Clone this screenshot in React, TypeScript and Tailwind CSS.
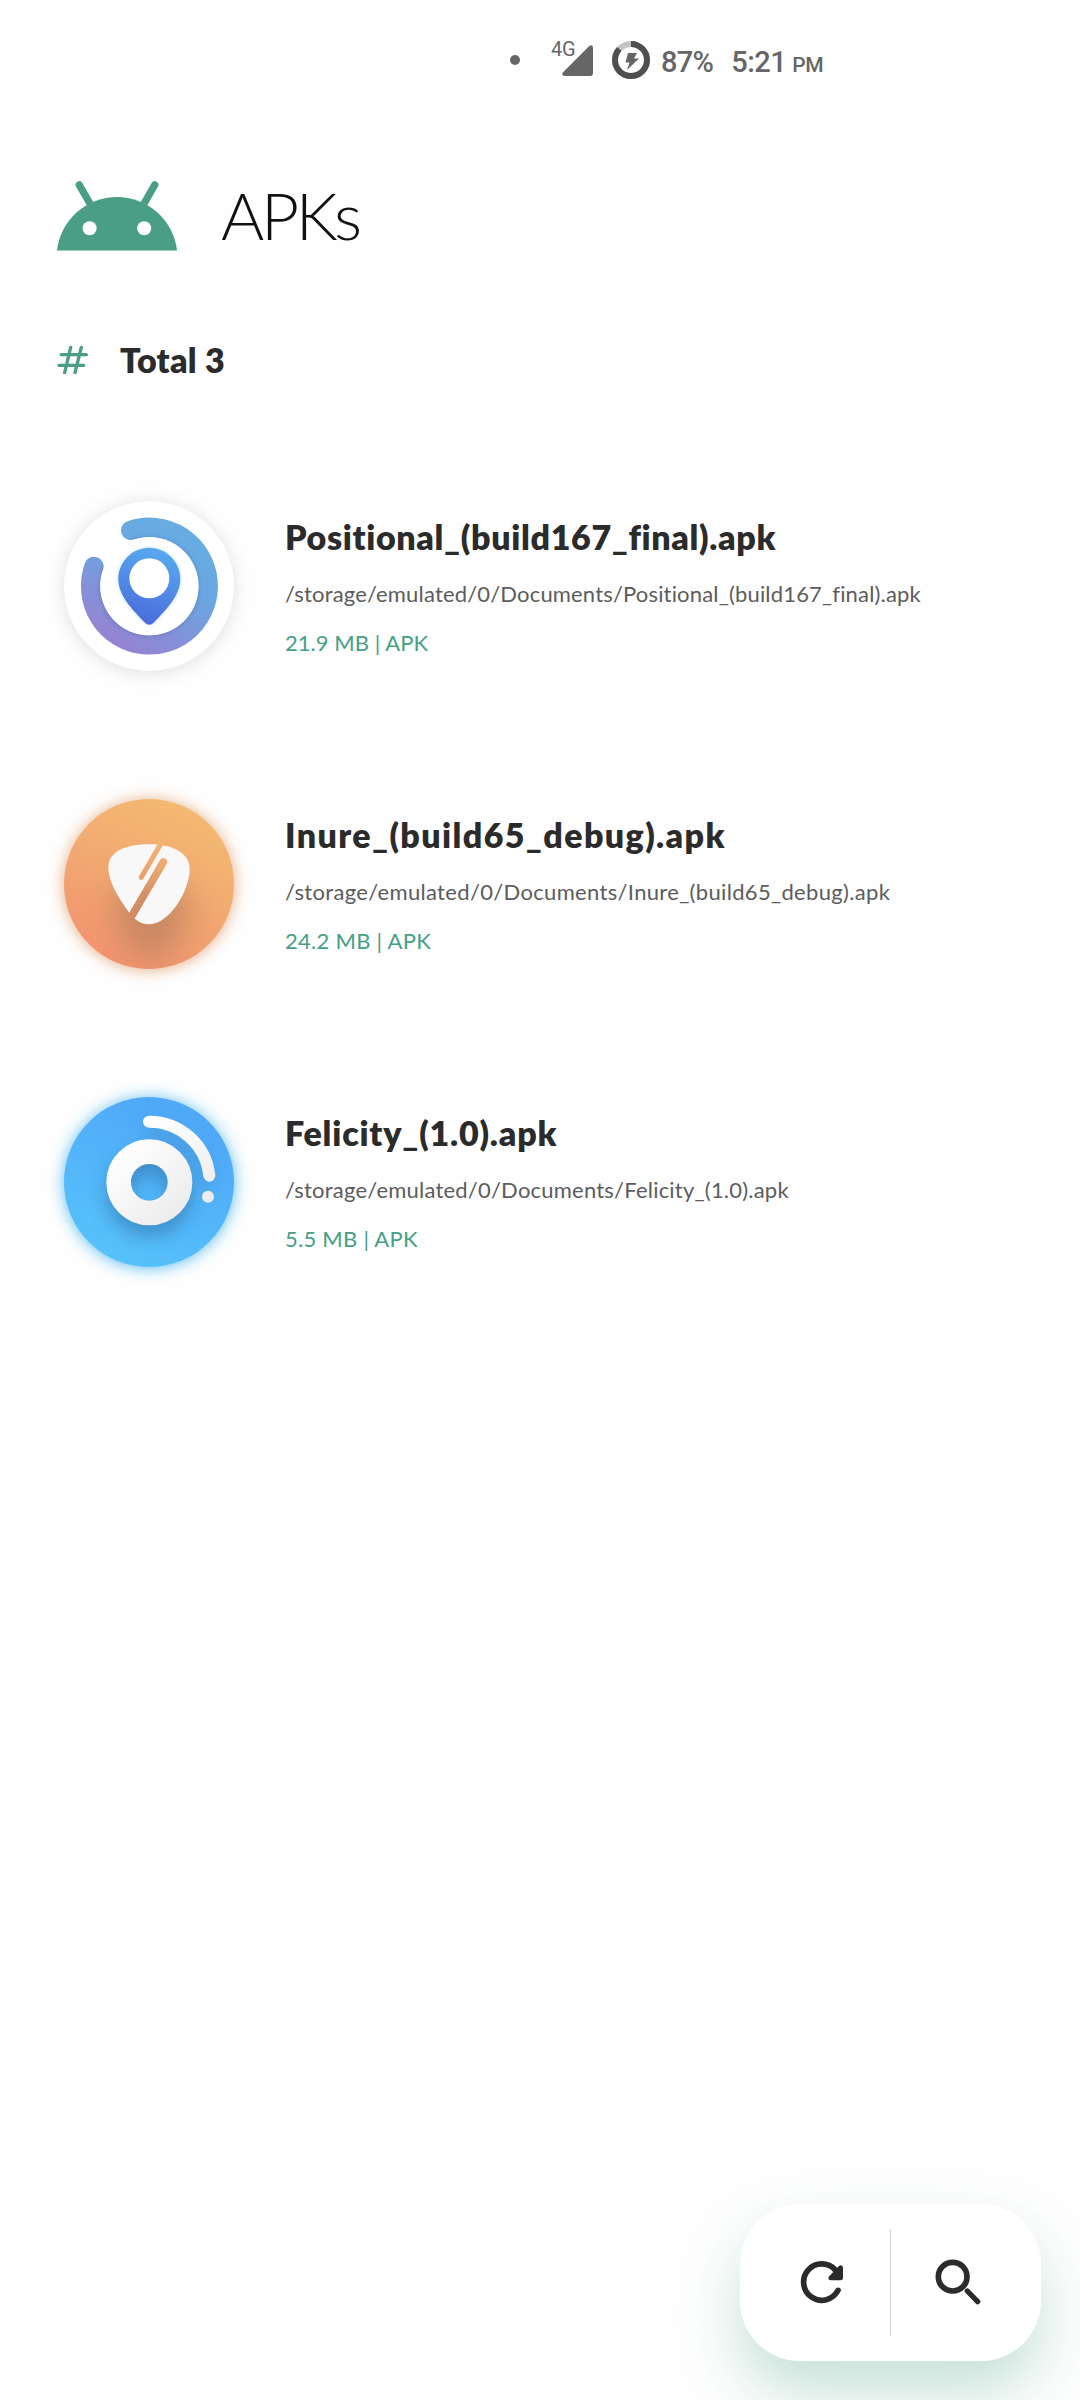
type Apk = {
  name: string;
  path: string;
  meta: string;
  nameTracking: string;
  pathTracking: string;
  metaTracking: string;
  icon: () => React.ReactNode;
};

function PositionalIcon() {
  return (
    <svg className="size-[170px] shrink-0 overflow-visible" viewBox="72 63 510 510">
      <defs>
        <linearGradient id="posRing" gradientUnits="userSpaceOnUse" x1="420" y1="160" x2="230" y2="490">
          <stop offset="0" stopColor="#67ace3" />
          <stop offset="0.35" stopColor="#6aa6e0" />
          <stop offset="1" stopColor="#9583d3" />
        </linearGradient>
        <linearGradient id="posPin" gradientUnits="userSpaceOnUse" x1="370" y1="215" x2="300" y2="425">
          <stop offset="0" stopColor="#57a9f0" />
          <stop offset="1" stopColor="#4b6cda" />
        </linearGradient>
        <filter id="posBlur" x="-30%" y="-30%" width="160%" height="160%">
          <feGaussianBlur stdDeviation="26" />
        </filter>
        <filter id="posGlow" x="-30%" y="-30%" width="160%" height="160%">
          <feGaussianBlur stdDeviation="6" />
        </filter>
        <mask id="posMask" maskUnits="userSpaceOnUse" x="72" y="63" width="510" height="510">
          <path d="M272 151A176.5 176.5 0 1 1 162 259" fill="none" stroke="#fff" strokeWidth="58" strokeLinecap="round" />
        </mask>
      </defs>
      <circle cx="327" cy="324" r="254" fill="#5f6a74" opacity="0.22" filter="url(#posBlur)" />
      <circle cx="327" cy="318" r="255" fill="#fff" />
      <path d="M272 151A176.5 176.5 0 1 1 162 259" fill="none" stroke="url(#posRing)" strokeWidth="58" strokeLinecap="round" />
      <g mask="url(#posMask)">
        <circle cx="328" cy="320" r="149" fill="#4a4f96" opacity="0.3" filter="url(#posGlow)" />
      </g>
      <circle cx="328" cy="319" r="147" fill="#fff" />
      <path d="M328 203C277 203 235 245 235 297C235 350 282 395 313 427Q328 441 343 427C374 395 421 350 421 297C421 245 379 203 328 203Z" fill="#6fb8f5" opacity="0.4" filter="url(#posGlow)" />
      <path d="M328 203C277 203 235 245 235 297C235 346 276 388 315 428Q328 440 341 428C380 388 421 346 421 297C421 245 379 203 328 203Z" fill="url(#posPin)" />
      <circle cx="328" cy="295" r="60" fill="#fff" />
    </svg>
  );
}

function InureIcon() {
  return (
    <svg className="size-[170px] shrink-0 overflow-visible" viewBox="72 71 510 510">
      <defs>
        <linearGradient id="inBg" gradientUnits="userSpaceOnUse" x1="420" y1="90" x2="200" y2="560">
          <stop offset="0" stopColor="#f3b972" />
          <stop offset="0.5" stopColor="#f2a871" />
          <stop offset="1" stopColor="#f3936f" />
        </linearGradient>
        <filter id="inBlur" x="-30%" y="-30%" width="160%" height="160%">
          <feGaussianBlur stdDeviation="24" />
        </filter>
        <filter id="inShade" x="-70%" y="-70%" width="240%" height="240%">
          <feGaussianBlur stdDeviation="46" />
        </filter>
        <clipPath id="inClip">
          <circle cx="327" cy="326" r="255" />
        </clipPath>
        <mask id="inSlots" maskUnits="userSpaceOnUse" x="180" y="180" width="300" height="300">
          <rect x="180" y="180" width="300" height="300" fill="#fff" />
          <path d="M304 306L366 199" stroke="#000" strokeWidth="15" strokeLinecap="round" />
          <path d="M370 260L264 441" stroke="#000" strokeWidth="23" strokeLinecap="round" />
        </mask>
      </defs>
      <circle cx="327" cy="328" r="254" fill="#e09a66" opacity="0.85" filter="url(#inBlur)" />
      <circle cx="327" cy="326" r="255" fill="url(#inBg)" />
      <g clipPath="url(#inClip)">
        <path d="M327 320C410 320 455 350 450 400C440 460 390 560 335 560C280 560 225 460 218 400C215 350 250 320 327 320Z" fill="#b07c5c" opacity="0.62" filter="url(#inShade)" />
      </g>
      <path mask="url(#inSlots)" d="M327 207C400 207 449 234 449 282C449 345 388 447 328 447C296 447 280 428 264 407C236 368 205 318 205 277C205 226 262 207 327 207Z" fill="#f8f8f8" />
    </svg>
  );
}

function FelicityIcon() {
  return (
    <svg className="size-[170px] shrink-0 overflow-visible" viewBox="72 80 510 510">
      <defs>
        <linearGradient id="feBg" gradientUnits="userSpaceOnUse" x1="430" y1="130" x2="220" y2="560">
          <stop offset="0" stopColor="#4fa8f8" />
          <stop offset="1" stopColor="#56c1fb" />
        </linearGradient>
        <linearGradient id="feDisc" gradientUnits="userSpaceOnUse" x1="240" y1="240" x2="420" y2="430">
          <stop offset="0" stopColor="#ffffff" />
          <stop offset="1" stopColor="#ececec" />
        </linearGradient>
        <linearGradient id="feArc" gradientUnits="userSpaceOnUse" x1="330" y1="150" x2="510" y2="390">
          <stop offset="0" stopColor="#ffffff" />
          <stop offset="1" stopColor="#ececec" />
        </linearGradient>
        <filter id="feBlur" x="-30%" y="-30%" width="160%" height="160%">
          <feGaussianBlur stdDeviation="24" />
        </filter>
        <filter id="feShade" x="-40%" y="-40%" width="180%" height="180%">
          <feGaussianBlur stdDeviation="26" />
        </filter>
        <clipPath id="feClip">
          <circle cx="327" cy="335" r="255" />
        </clipPath>
      </defs>
      <circle cx="327" cy="338" r="255" fill="#4fb8ee" opacity="0.95" filter="url(#feBlur)" />
      <circle cx="327" cy="335" r="255" fill="url(#feBg)" />
      <g clipPath="url(#feClip)">
        <g fill="none" stroke="#27699c" strokeLinecap="round" filter="url(#feShade)">
          <circle cx="328" cy="370" r="92" strokeWidth="74" opacity="0.5" />
          <path d="M327 185A181 181 0 0 1 504 346" strokeWidth="30" opacity="0.35" />
        </g>
      </g>
      <circle cx="328" cy="336" r="92" fill="none" stroke="url(#feDisc)" strokeWidth="74" />
      <path d="M327 154A181 181 0 0 1 508 316" fill="none" stroke="url(#feArc)" strokeWidth="36" strokeLinecap="round" />
      <circle cx="504" cy="379" r="18" fill="url(#feArc)" />
    </svg>
  );
}

const apks: Apk[] = [
  {
    name: "Positional_(build167_final).apk",
    path: "/storage/emulated/0/Documents/Positional_(build167_final).apk",
    meta: "21.9 MB | APK",
    nameTracking: "tracking-[0.65px]",
    pathTracking: "tracking-[0.17px]",
    metaTracking: "tracking-[0.04px]",
    icon: PositionalIcon,
  },
  {
    name: "Inure_(build65_debug).apk",
    path: "/storage/emulated/0/Documents/Inure_(build65_debug).apk",
    meta: "24.2 MB | APK",
    nameTracking: "tracking-[1.38px]",
    pathTracking: "tracking-[0.33px]",
    metaTracking: "tracking-[0.27px]",
    icon: InureIcon,
  },
  {
    name: "Felicity_(1.0).apk",
    path: "/storage/emulated/0/Documents/Felicity_(1.0).apk",
    meta: "5.5 MB | APK",
    nameTracking: "tracking-[0.8px]",
    pathTracking: "tracking-[0.21px]",
    metaTracking: "tracking-[0.25px]",
    icon: FelicityIcon,
  },
];

function StatusBar() {
  return (
    <div className="flex h-[120px] items-center pl-[510px] font-['Roboto',sans-serif] text-[#666666]">
      <span className="size-2.5 rounded-full bg-[#666666]" />
      <div className="relative ml-[31px] h-[36px] w-[42px]">
        <span className="absolute top-[-3px] left-0 text-[20px] leading-5 tracking-[-0.3px]">4G</span>
        <svg className="absolute top-[3px] left-[11px] size-[31px]" viewBox="0 0 31 31">
          <path d="M27.5 0.8Q31 -1 31 3V28Q31 31 28 31H3Q-1 31 0.8 27.5Z" fill="#666" />
        </svg>
      </div>
      <svg className="ml-[19px] size-[38px]" viewBox="0 0 38 38">
        <circle cx="19" cy="19" r="16" fill="none" stroke="#c4c4c4" strokeWidth="6" />
        <circle cx="19" cy="19" r="16" fill="none" stroke="#4f4f4f" strokeWidth="6" pathLength="100" strokeDasharray="87 100" transform="rotate(-90 19 19)" />
        <path d="M16 12H25L22 17.5H27L15 29L17.5 21.5H13.5Z" fill="#666" />
      </svg>
      <span className="ml-[11px] pt-[5px] text-[29px] leading-none font-medium tracking-[-0.7px]">87%</span>
      <span className="ml-[18px] pt-[5px] text-[29px] leading-none font-medium tracking-[-0.5px]">5:21</span>
      <span className="ml-[6px] pt-[10px] text-[21px] leading-none font-medium tracking-[-0.5px]">PM</span>
    </div>
  );
}

function AndroidHead() {
  return (
    <svg className="mt-[10px] h-[70px] w-[120px]" viewBox="0 0 120 70">
      <path d="M0 69.5A60.4 60.4 0 0 1 120 69.5Z" fill="#4a9e85" />
      <path d="M22.3 4L35.5 27M97.7 4L84.5 27" stroke="#4a9e85" strokeWidth="7.4" strokeLinecap="round" />
      <circle cx="32.6" cy="47.3" r="7" fill="#fefefe" />
      <circle cx="87.2" cy="47.3" r="7" fill="#fefefe" />
    </svg>
  );
}

export default function App() {
  return (
    <div className="flex h-[2400px] w-[1080px] flex-col overflow-hidden bg-[#fefefe] font-['Lato','Open_Sans',sans-serif]">
      <StatusBar />

      <header className="mt-[51px] flex h-20 items-start pl-[57px]">
        <AndroidHead />
        <h1 className="ml-[44px] pt-1 text-[66px] leading-[80px] font-light tracking-[-3.3px] text-[#111111]">APKs</h1>
      </header>

      <div className="mt-[88px] flex h-10 items-center pl-[57px]">
        <svg className="h-[30px] w-[32px]" viewBox="0 0 96 90">
          <path d="M13 32H88M6 64H80M41 10L23 86M73 10L54 86" stroke="#4a9e85" strokeWidth="10" strokeLinecap="round" />
        </svg>
        <span className="ml-[31px] pt-px text-[34px] leading-10 font-extrabold tracking-[0.25px] text-[#2b2b2b]">Total 3</span>
      </div>

      <main className="mt-[58px] flex flex-col">
        {apks.map((apk) => (
          <div key={apk.name} className="flex h-[298px] items-center pl-16">
            <apk.icon />
            <div className="ml-[51px] flex h-full flex-col whitespace-nowrap">
              <span className={`mt-20 text-[34px] leading-10 font-extrabold text-[#2b2b2b] ${apk.nameTracking}`}>{apk.name}</span>
              <span className={`mt-[17px] text-[22px] leading-10 text-[#5c5c5c] ${apk.pathTracking}`}>{apk.path}</span>
              <span className={`mt-[9px] text-[22px] leading-10 text-[#45a086] ${apk.metaTracking}`}>{apk.meta}</span>
            </div>
          </div>
        ))}
      </main>

      <div className="mt-auto mr-[39px] mb-[39px] flex h-[157px] w-[301px] items-center self-end rounded-[60px] bg-white shadow-[0_32px_60px_rgba(74,158,133,0.3)]">
        <button className="flex h-full w-[150px] items-center justify-center pl-[13px]" aria-label="Refresh">
          <svg className="size-[60px]" viewBox="275 248 180 180">
            <path d="M413 360A54.5 54.5 0 1 1 405 299" fill="none" stroke="#2b2b2b" strokeWidth="17" strokeLinecap="round" />
            <path d="M421 292V323H391Z" fill="#2b2b2b" stroke="#2b2b2b" strokeWidth="14" strokeLinejoin="round" />
          </svg>
        </button>
        <span className="h-[107px] w-px bg-[#d4d4d4]" />
        <button className="flex h-full w-[150px] items-center justify-center pr-3" aria-label="Search">
          <svg className="size-[60px]" viewBox="691 247 180 180">
            <circle cx="759" cy="318" r="43" fill="none" stroke="#2b2b2b" strokeWidth="17" />
            <path d="M803 361L834 393" stroke="#2b2b2b" strokeWidth="16" strokeLinecap="round" />
          </svg>
        </button>
      </div>
    </div>
  );
}
